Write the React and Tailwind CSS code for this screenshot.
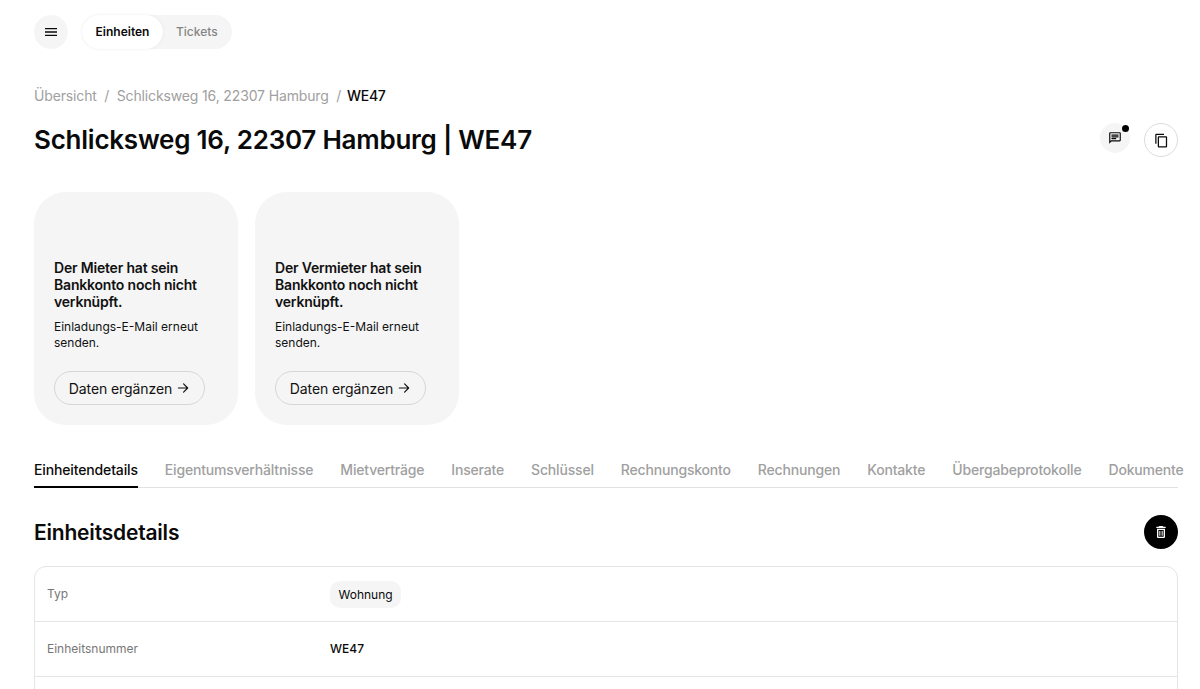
import React from "react";

const tabs = [
  "Einheitendetails",
  "Eigentumsverhältnisse",
  "Mietverträge",
  "Inserate",
  "Schlüssel",
  "Rechnungskonto",
  "Rechnungen",
  "Kontakte",
  "Übergabeprotokolle",
  "Dokumente",
];

const MenuIcon = () => (
  <svg width="16" height="16" viewBox="0 0 24 24" fill="currentColor">
    <path d="M3 18h18v-2H3v2zm0-5h18v-2H3v2zm0-7v2h18V6H3z" />
  </svg>
);

const CommentIcon = () => (
  <svg width="14" height="14" viewBox="0 0 24 24" fill="currentColor">
    <path d="M20 2H4c-1.1 0-2 .9-2 2v18l4-4h14c1.1 0 2-.9 2-2V4c0-1.1-.9-2-2-2zm0 14H5.17L4 17.17V4h16v12zM6 12h8v2H6v-2zm0-3h12v2H6V9zm0-3h12v2H6V6z" />
  </svg>
);

const CopyIcon = () => (
  <svg width="15" height="15" viewBox="0 0 24 24" fill="currentColor">
    <path d="M16 1H4c-1.1 0-2 .9-2 2v14h2V3h12V1zm-1 4H8c-1.1 0-2 .9-2 2v14c0 1.1.9 2 2 2h11c1.1 0 2-.9 2-2V7c0-1.1-.9-2-2-2zm0 2h4v14H8V7h7z" />
  </svg>
);

const TrashIcon = () => (
  <svg width="16" height="16" viewBox="0 0 24 24" fill="currentColor">
    <path d="M6 19c0 1.1.9 2 2 2h8c1.1 0 2-.9 2-2V7H6v12zm2-10h8v10H8V9zm1.5 1.5h1.5v7H9.5v-7zm3.5 0h1.5v7H13v-7zM15.5 4l-1-1h-5l-1 1H5v2h14V4h-3.5z" />
  </svg>
);

const ArrowIcon = () => (
  <svg width="14" height="14" viewBox="0 0 24 24" fill="none" stroke="currentColor" strokeWidth="2" strokeLinecap="round" strokeLinejoin="round">
    <path d="M4 12h16M13 5l7 7-7 7" />
  </svg>
);

const BankCard = ({ who }) => (
  <div className="flex h-[233px] w-[204px] flex-col justify-end rounded-[32px] bg-[#f5f5f5] px-[20px] pb-[20px]">
    <h3 className="text-[14px] leading-[17px] font-semibold tracking-[-0.19px] text-[#111]">
      Der {who} hat sein Bankkonto noch nicht verknüpft.
    </h3>
    <p className="mt-[9px] text-[12px] leading-[16px] text-[#111]">Einladungs-E-Mail erneut senden.</p>
    <button className="mt-[20px] flex h-[34px] w-[151px] items-center justify-center gap-[4px] rounded-full border border-[#d6d6d6] text-[14px] tracking-[-0.1px] text-[#111]">
      Daten ergänzen <ArrowIcon />
    </button>
  </div>
);

export default function App() {
  return (
    <div className="h-[689px] overflow-hidden bg-white pr-[22px] pl-[34px] font-['Inter',sans-serif] text-[#0a0a0a]">
      <div className="flex items-center gap-[14px] pt-[15px]">
        <button className="flex size-[34px] items-center justify-center rounded-full bg-[#f5f5f5]">
          <MenuIcon />
        </button>
        <div className="flex h-[34px] items-center rounded-full bg-[#f5f5f5] pr-[14px]">
          <span className="flex h-[34px] w-[81px] items-center justify-center rounded-full bg-white text-[12px] font-semibold shadow-[0_0_3px_rgba(0,0,0,0.08)]">
            Einheiten
          </span>
          <span className="ml-[13px] text-[12px] font-medium text-[#858585]">Tickets</span>
        </div>
      </div>

      <nav className="mt-[37px] flex h-[18px] items-center gap-[7.5px] text-[14px] tracking-[-0.14px] text-[#a0a0a0]">
        <span>Übersicht</span>
        <span>/</span>
        <span>Schlicksweg 16, 22307 Hamburg</span>
        <span>/</span>
        <span className="-ml-[1.5px] font-medium tracking-[-0.3px] text-[#0a0a0a]">WE47</span>
      </nav>

      <div className="mt-[19px] flex items-start justify-between">
        <h1 className="text-[26px] leading-[34px] font-semibold tracking-[-0.24px]">Schlicksweg 16, 22307 Hamburg | WE47</h1>
        <div className="flex items-start gap-[14px]">
          <div className="relative flex size-[30px] items-center justify-center rounded-full bg-[#f5f5f5]">
            <CommentIcon />
            <span className="absolute top-[1.5px] right-[1px] size-[7px] rounded-full bg-black" />
          </div>
          <div className="flex size-[34px] items-center justify-center rounded-full border border-[#dcdcdc]">
            <CopyIcon />
          </div>
        </div>
      </div>

      <div className="mt-[35px] flex gap-[17px]">
        <BankCard who="Mieter" />
        <BankCard who="Vermieter" />
      </div>

      <div className="mt-[26px] flex h-[37px] gap-[27px] whitespace-nowrap border-b border-[#e2e2e2] text-[14px] tracking-[-0.18px] text-[#a0a0a0]">
        {tabs.map((tab, i) => (
          <span
            key={tab}
            className={i === 0 ? "h-[37px] border-b-2 border-black pt-[8px] font-medium tracking-[-0.14px] text-[#0a0a0a]" : "pt-[8px] font-medium"}
          >
            {tab}
          </span>
        ))}
      </div>

      <div className="mt-[27px] flex h-[34px] items-start justify-between">
        <h2 className="pt-[1px] text-[21px] leading-[34px] font-semibold tracking-[-0.2px]">Einheitsdetails</h2>
        <button className="flex size-[34px] items-center justify-center rounded-full bg-black text-white">
          <TrashIcon />
        </button>
      </div>

      <div className="mt-[17px] rounded-t-[12px] border border-[#e5e5e5]">
        <div className="flex h-[55px] items-center border-b border-[#e5e5e5] pl-[12px]">
          <span className="w-[283px] text-[12px] text-[#777]">Typ</span>
          <span className="rounded-[10px] bg-[#f5f5f5] px-[8.5px] py-[6px] text-[12px] leading-[15px]">Wohnung</span>
        </div>
        <div className="flex h-[55px] items-center border-b border-[#e5e5e5] pl-[12px]">
          <span className="w-[283px] text-[12px] text-[#777]">Einheitsnummer</span>
          <span className="text-[12px] font-medium">WE47</span>
        </div>
        <div className="h-[40px]" />
      </div>
    </div>
  );
}
